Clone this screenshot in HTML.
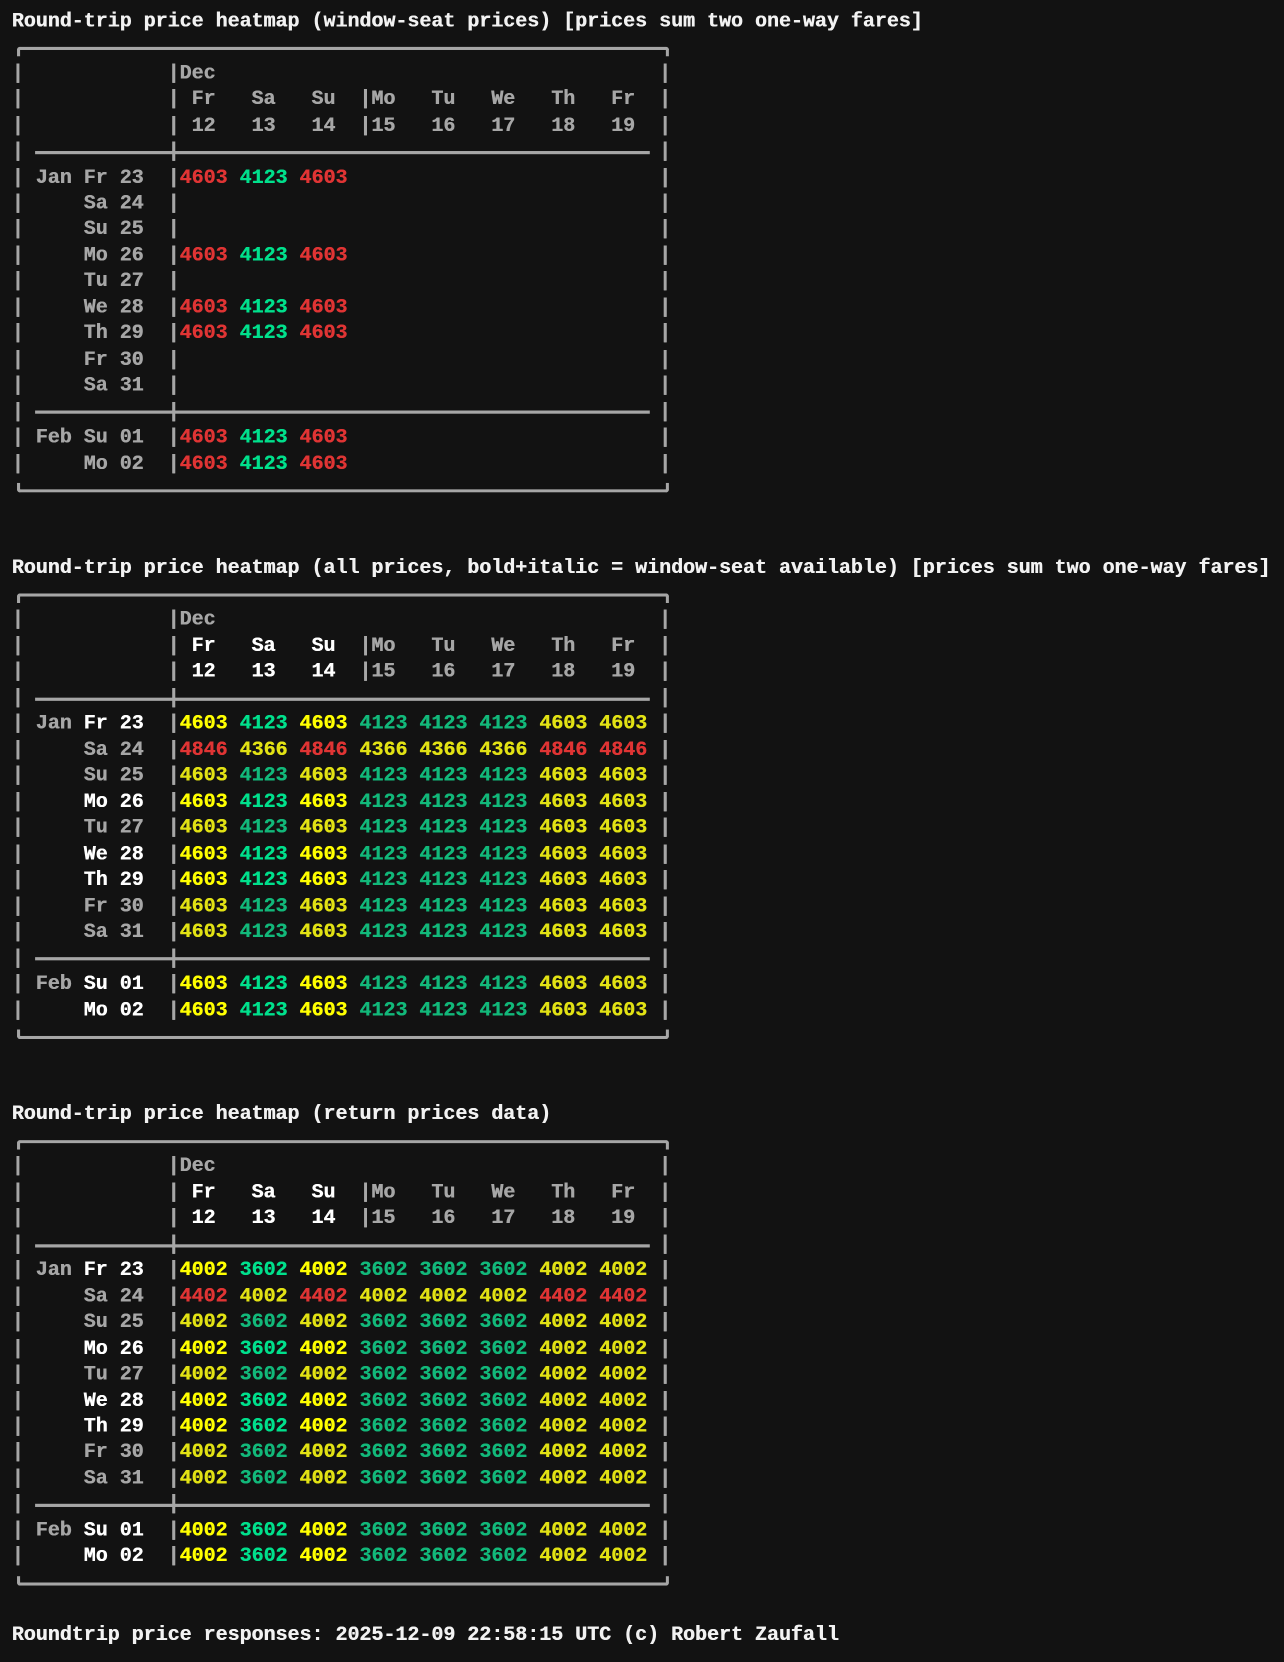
<!DOCTYPE html>
<html><head><meta charset="utf-8"><style>
html,body{margin:0;padding:0;background:#121212;width:1284px;height:1662px;overflow:hidden;position:relative}
#z{position:absolute;left:0;top:0;width:1200px;height:1560px;overflow:hidden;transform:scale(1.0635);transform-origin:0 0}
pre{position:absolute;left:11px;top:7.7px;margin:0;font-family:"Liberation Mono","DejaVu Sans Mono",monospace;font-weight:bold;font-size:18.8px;line-height:24.47px;color:#a6a6a6;text-shadow:0.4px 0 currentColor}
.t{color:#f2f2f2}.w{color:#fff}.Y{color:#ffff00}.y{color:#e2e214}.G{color:#00e08c}.h{color:#12b87a}.R{color:#e03434}
.tb,.bb,.rl{position:absolute;border-color:#a6a6a6;border-style:solid;box-sizing:border-box}
.tb{left:16px;width:613px;height:9px;border-width:3px 3px 0 3px;border-radius:3px 3px 0 0}
.bb{left:16px;width:613px;height:9px;border-width:0 3px 3px 3px;border-radius:0 0 3px 3px}
.rl{left:33px;width:578px;height:3px;border-width:3px 0 0 0}
</style></head><body><div id="z">
<div class="tb" style="top:44px"></div><div class="rl" style="top:142px"></div><div class="rl" style="top:386px"></div><div class="bb" style="top:454px"></div>
<div class="tb" style="top:558px"></div><div class="rl" style="top:656px"></div><div class="rl" style="top:900px"></div><div class="bb" style="top:968px"></div>
<div class="tb" style="top:1072px"></div><div class="rl" style="top:1170px"></div><div class="rl" style="top:1414px"></div><div class="bb" style="top:1482px"></div>
<pre><span class="t">Round-trip price heatmap (window-seat prices) [prices sum two one-way fares]</span>

|            |Dec                                     |
|            | Fr   Sa   Su  |Mo   Tu   We   Th   Fr  |
|            | 12   13   14  |15   16   17   18   19  |
|            |                                        |
| Jan Fr 23  |<span class="R">4603</span> <span class="G">4123</span> <span class="R">4603</span>                          |
|     Sa 24  |                                        |
|     Su 25  |                                        |
|     Mo 26  |<span class="R">4603</span> <span class="G">4123</span> <span class="R">4603</span>                          |
|     Tu 27  |                                        |
|     We 28  |<span class="R">4603</span> <span class="G">4123</span> <span class="R">4603</span>                          |
|     Th 29  |<span class="R">4603</span> <span class="G">4123</span> <span class="R">4603</span>                          |
|     Fr 30  |                                        |
|     Sa 31  |                                        |
|            |                                        |
| Feb Su 01  |<span class="R">4603</span> <span class="G">4123</span> <span class="R">4603</span>                          |
|     Mo 02  |<span class="R">4603</span> <span class="G">4123</span> <span class="R">4603</span>                          |



<span class="t">Round-trip price heatmap (all prices, bold+italic = window-seat available) [prices sum two one-way fares]</span>

|            |Dec                                     |
|            |<span class="w"> Fr   Sa   Su </span> |Mo   Tu   We   Th   Fr  |
|            |<span class="w"> 12   13   14 </span> |15   16   17   18   19  |
|            |                                        |
| Jan <span class="w">Fr 23</span>  |<span class="Y">4603</span> <span class="G">4123</span> <span class="Y">4603</span> <span class="h">4123 4123 4123</span> <span class="y">4603 4603</span> |
|     Sa 24  |<span class="R">4846</span> <span class="y">4366</span> <span class="R">4846</span> <span class="y">4366 4366 4366</span> <span class="R">4846 4846</span> |
|     Su 25  |<span class="y">4603</span> <span class="h">4123</span> <span class="y">4603</span> <span class="h">4123 4123 4123</span> <span class="y">4603 4603</span> |
|     <span class="w">Mo 26</span>  |<span class="Y">4603</span> <span class="G">4123</span> <span class="Y">4603</span> <span class="h">4123 4123 4123</span> <span class="y">4603 4603</span> |
|     Tu 27  |<span class="y">4603</span> <span class="h">4123</span> <span class="y">4603</span> <span class="h">4123 4123 4123</span> <span class="y">4603 4603</span> |
|     <span class="w">We 28</span>  |<span class="Y">4603</span> <span class="G">4123</span> <span class="Y">4603</span> <span class="h">4123 4123 4123</span> <span class="y">4603 4603</span> |
|     <span class="w">Th 29</span>  |<span class="Y">4603</span> <span class="G">4123</span> <span class="Y">4603</span> <span class="h">4123 4123 4123</span> <span class="y">4603 4603</span> |
|     Fr 30  |<span class="y">4603</span> <span class="h">4123</span> <span class="y">4603</span> <span class="h">4123 4123 4123</span> <span class="y">4603 4603</span> |
|     Sa 31  |<span class="y">4603</span> <span class="h">4123</span> <span class="y">4603</span> <span class="h">4123 4123 4123</span> <span class="y">4603 4603</span> |
|            |                                        |
| Feb <span class="w">Su 01</span>  |<span class="Y">4603</span> <span class="G">4123</span> <span class="Y">4603</span> <span class="h">4123 4123 4123</span> <span class="y">4603 4603</span> |
|     <span class="w">Mo 02</span>  |<span class="Y">4603</span> <span class="G">4123</span> <span class="Y">4603</span> <span class="h">4123 4123 4123</span> <span class="y">4603 4603</span> |



<span class="t">Round-trip price heatmap (return prices data)</span>

|            |Dec                                     |
|            |<span class="w"> Fr   Sa   Su </span> |Mo   Tu   We   Th   Fr  |
|            |<span class="w"> 12   13   14 </span> |15   16   17   18   19  |
|            |                                        |
| Jan <span class="w">Fr 23</span>  |<span class="Y">4002</span> <span class="G">3602</span> <span class="Y">4002</span> <span class="h">3602 3602 3602</span> <span class="y">4002 4002</span> |
|     Sa 24  |<span class="R">4402</span> <span class="y">4002</span> <span class="R">4402</span> <span class="y">4002 4002 4002</span> <span class="R">4402 4402</span> |
|     Su 25  |<span class="y">4002</span> <span class="h">3602</span> <span class="y">4002</span> <span class="h">3602 3602 3602</span> <span class="y">4002 4002</span> |
|     <span class="w">Mo 26</span>  |<span class="Y">4002</span> <span class="G">3602</span> <span class="Y">4002</span> <span class="h">3602 3602 3602</span> <span class="y">4002 4002</span> |
|     Tu 27  |<span class="y">4002</span> <span class="h">3602</span> <span class="y">4002</span> <span class="h">3602 3602 3602</span> <span class="y">4002 4002</span> |
|     <span class="w">We 28</span>  |<span class="Y">4002</span> <span class="G">3602</span> <span class="Y">4002</span> <span class="h">3602 3602 3602</span> <span class="y">4002 4002</span> |
|     <span class="w">Th 29</span>  |<span class="Y">4002</span> <span class="G">3602</span> <span class="Y">4002</span> <span class="h">3602 3602 3602</span> <span class="y">4002 4002</span> |
|     Fr 30  |<span class="y">4002</span> <span class="h">3602</span> <span class="y">4002</span> <span class="h">3602 3602 3602</span> <span class="y">4002 4002</span> |
|     Sa 31  |<span class="y">4002</span> <span class="h">3602</span> <span class="y">4002</span> <span class="h">3602 3602 3602</span> <span class="y">4002 4002</span> |
|            |                                        |
| Feb <span class="w">Su 01</span>  |<span class="Y">4002</span> <span class="G">3602</span> <span class="Y">4002</span> <span class="h">3602 3602 3602</span> <span class="y">4002 4002</span> |
|     <span class="w">Mo 02</span>  |<span class="Y">4002</span> <span class="G">3602</span> <span class="Y">4002</span> <span class="h">3602 3602 3602</span> <span class="y">4002 4002</span> |


<span class="t">Roundtrip price responses: 2025-12-09 22:58:15 UTC (c) Robert Zaufall</span>
</pre>
</div></body></html>
